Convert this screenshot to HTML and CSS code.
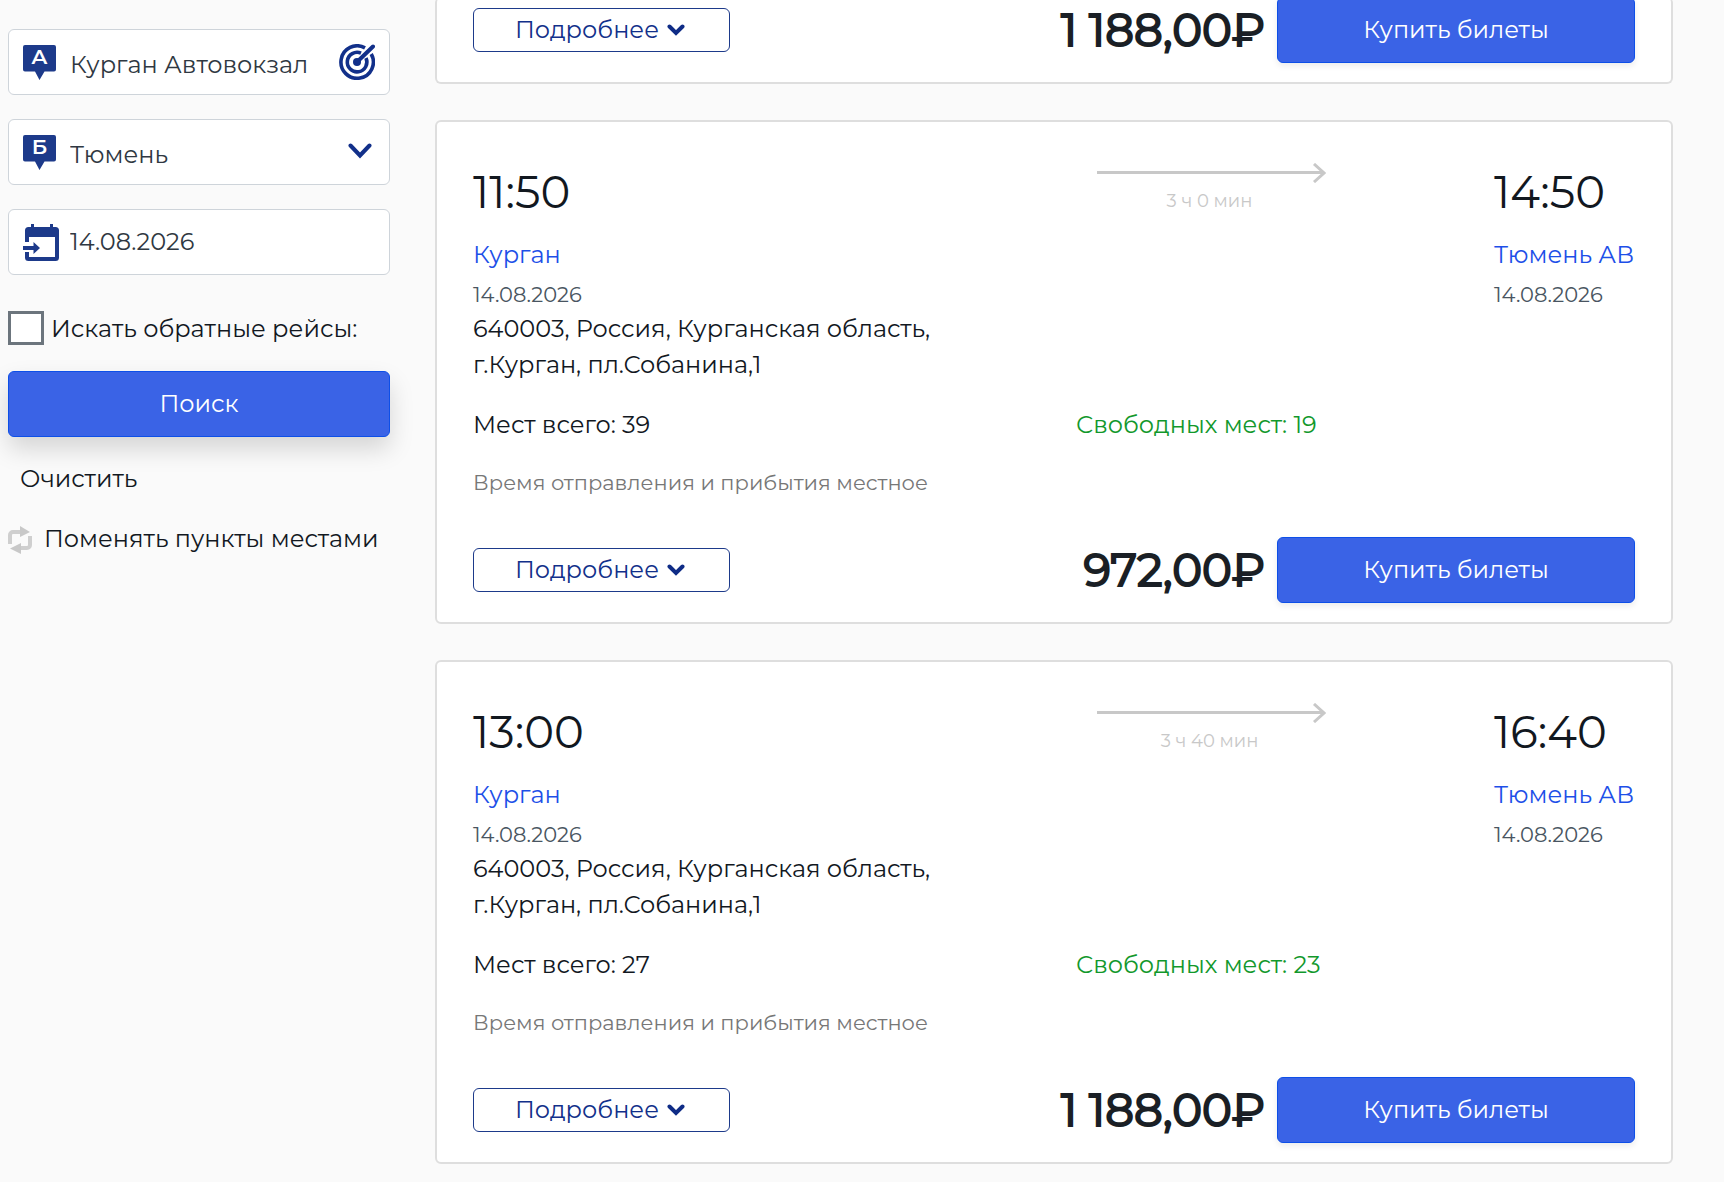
FILE: index.html
```html
<!DOCTYPE html>
<html lang="ru">
<head>
<meta charset="utf-8">
<meta name="viewport" content="width=device-width, initial-scale=1">
<title>Курган Автовокзал — Тюмень</title>
<link rel="stylesheet" href="styles.css">
</head>
<body>
<div class="page">
  <form class="search">
    <div class="field field-place">
      <svg class="pin" width="33" height="35" viewBox="0 0 33 35" aria-hidden="true"><path d="M2 0h29a2 2 0 0 1 2 2v22.500a2 2 0 0 1-2 2H21.500L16.500 35l-4.500-8.500H2a2 2 0 0 1-2-2V2a2 2 0 0 1 2-2z" fill="#1d3a8a"/><text x="16.500" y="19" class="pin-letter">А</text></svg>
      <input class="control" type="text" value="Курган Автовокзал" aria-label="Пункт отправления">
      <svg class="target" width="36" height="36" viewBox="0 0 36 36" fill="none" stroke="#12308a" stroke-width="3.600" aria-hidden="true"><path d="M26 3.900A16.200 16.200 0 1 0 32.200 10"/><path d="M22 9.100A9.800 9.800 0 1 0 27 14"/><circle cx="18" cy="18" r="4" fill="#12308a" stroke="none"/><path d="M18 18L34 2.500" stroke-width="4" stroke-linecap="round"/></svg>
    </div>
    <div class="field field-place">
      <svg class="pin" width="33" height="35" viewBox="0 0 33 35" aria-hidden="true"><path d="M2 0h29a2 2 0 0 1 2 2v22.500a2 2 0 0 1-2 2H21.500L16.500 35l-4.500-8.500H2a2 2 0 0 1-2-2V2a2 2 0 0 1 2-2z" fill="#1d3a8a"/><text x="16.500" y="19" class="pin-letter">Б</text></svg>
      <select class="control" aria-label="Пункт назначения"><option>Тюмень</option></select>
      <svg class="drop" width="24" height="16" viewBox="0 0 24 16" fill="none" stroke="#12308a" stroke-width="4" stroke-linecap="round" aria-hidden="true"><path d="M2.500 2.500L12 12.500l9.500-10"/></svg>
    </div>
    <div class="field">
      <svg class="calendar" width="36" height="37" viewBox="0 0 36 37" aria-hidden="true"><path d="M8 0h3v3h16V0h3v3h2.500A3.500 3.500 0 0 1 36 6.500v27a3.500 3.500 0 0 1-3.500 3.500h-27A3.500 3.500 0 0 1 2 33.500V28h4v5h26V13H6v5H2V6.500A3.500 3.500 0 0 1 5.500 3H8z" fill="#1d3a8a"/><path d="M0 22h10.500v-4l6.500 6-6.500 6v-4H0z" fill="#1d3a8a"/></svg>
      <input class="control" type="text" value="14.08.2026" aria-label="Дата отправления">
    </div>
    <label class="return"><input class="box" type="checkbox">Искать обратные рейсы:</label>
    <button class="btn btn-search" type="submit">Поиск</button>
    <button class="plain plain-clear" type="reset">Очистить</button>
    <button class="plain" type="button">
      <svg width="24" height="30" viewBox="0 -2 24 30" aria-hidden="true"><g fill="none" stroke="#cfcfcf" stroke-width="4"><path d="M2 18V9a3 3 0 0 1 3-3h8"/><path d="M22 10v9a3 3 0 0 1-3 3h-8"/></g><path d="M12 0l10 6-10 5zM13 17L2 22.500 13 28z" fill="#c8c8c8"/></svg>
      Поменять пункты местами
    </button>
  </form>

  <main class="results">
    <article class="card card-scrolled">
      <div class="actions">
        <button class="more" type="button">Подробнее <svg width="18" height="12" viewBox="0 0 18 12" aria-hidden="true"><path d="M2.500 2.500L9 9l6.500-6.500" fill="none" stroke="#0f2c86" stroke-width="4" stroke-linecap="round"/></svg></button>
        <span class="price">1 188,00₽</span>
        <button class="btn btn-buy" type="button">Купить билеты</button>
      </div>
    </article>

    <article class="card">
      <div class="trip">
        <div>
          <div class="time">11:50</div>
          <a class="station" href="#">Курган</a>
          <div class="date">14.08.2026</div>
          <div class="address">640003, Россия, Курганская область, г.Курган, пл.Собанина,1</div>
        </div>
        <div class="way">
          <svg width="230" height="20" viewBox="0 0 230 20" fill="none" stroke="#c8c8c8" stroke-width="3" aria-hidden="true"><path d="M1 9.500h227M218 1l10 9-10 9"/></svg>
          <div class="duration">3 ч 0 мин</div>
        </div>
        <div>
          <div class="time">14:50</div>
          <a class="station" href="#">Тюмень АВ</a>
          <div class="date">14.08.2026</div>
        </div>
      </div>
      <div class="seats"><span>Мест всего: 39</span><span class="free">Свободных мест: 19</span></div>
      <p class="note">Время отправления и прибытия местное</p>
      <div class="actions">
        <button class="more" type="button">Подробнее <svg width="18" height="12" viewBox="0 0 18 12" aria-hidden="true"><path d="M2.500 2.500L9 9l6.500-6.500" fill="none" stroke="#0f2c86" stroke-width="4" stroke-linecap="round"/></svg></button>
        <span class="price">972,00₽</span>
        <button class="btn btn-buy" type="button">Купить билеты</button>
      </div>
    </article>

    <article class="card">
      <div class="trip">
        <div>
          <div class="time">13:00</div>
          <a class="station" href="#">Курган</a>
          <div class="date">14.08.2026</div>
          <div class="address">640003, Россия, Курганская область, г.Курган, пл.Собанина,1</div>
        </div>
        <div class="way">
          <svg width="230" height="20" viewBox="0 0 230 20" fill="none" stroke="#c8c8c8" stroke-width="3" aria-hidden="true"><path d="M1 9.500h227M218 1l10 9-10 9"/></svg>
          <div class="duration">3 ч 40 мин</div>
        </div>
        <div>
          <div class="time">16:40</div>
          <a class="station" href="#">Тюмень АВ</a>
          <div class="date">14.08.2026</div>
        </div>
      </div>
      <div class="seats"><span>Мест всего: 27</span><span class="free">Свободных мест: 23</span></div>
      <p class="note">Время отправления и прибытия местное</p>
      <div class="actions">
        <button class="more" type="button">Подробнее <svg width="18" height="12" viewBox="0 0 18 12" aria-hidden="true"><path d="M2.500 2.500L9 9l6.500-6.500" fill="none" stroke="#0f2c86" stroke-width="4" stroke-linecap="round"/></svg></button>
        <span class="price">1 188,00₽</span>
        <button class="btn btn-buy" type="button">Купить билеты</button>
      </div>
    </article>
  </main>
</div>
</body>
</html>
```
FILE: styles.css
```css
* { box-sizing: border-box; }

body {
  margin: 0;
  background: #fafafa;
  color: #12181f;
  font-family: Montserrat, Inter, "Noto Sans", sans-serif;
  font-size: 24px;
  line-height: 36px;
}

button, input, select {
  font: inherit;
  color: inherit;
  margin: 0;
}

button { cursor: pointer; }

.page {
  display: grid;
  grid-template-columns: 382px minmax(0, 1fr);
  gap: 45px;
  align-items: start;
  padding: 0 51px 18px 8px;
}

/* search form */
.search {
  display: flex;
  flex-direction: column;
  padding-top: 29px;
}

.field {
  display: flex;
  align-items: center;
  height: 66px;
  margin-bottom: 24px;
  padding: 0 14px;
  background: #fff;
  border: 1px solid #ced4da;
  border-radius: 6px;
}

.field svg { flex: none; }
.pin { margin-right: 14px; overflow: visible; }
.calendar { margin-right: 11px; }
.drop { margin: 0 3px 2px 0; }

.pin-letter {
  fill: #fff;
  font-size: 21px;
  font-weight: 600;
  text-anchor: middle;
}

.control {
  flex: 1;
  min-width: 0;
  height: 64px;
  padding: 0 0 2px;
  border: 0;
  outline: 0;
  background: none;
  appearance: none;
  color: #2f3842;
}

.field-place .control { padding-top: 6px; }
.field-place select.control { padding-bottom: 0; }

.return {
  display: flex;
  align-items: flex-start;
  gap: 7px;
  margin: 12px 0 26px;
  height: 34px;
}

.box {
  appearance: none;
  width: 36px;
  height: 34px;
  background: #fff;
  border: 3px solid #6c757d;
}

.btn {
  height: 66px;
  background: #3a63e6;
  border: 1px solid #0d4fe8;
  border-radius: 6px;
  color: #fff;
}

.btn-search {
  box-shadow: 0 12px 24px rgba(0, 0, 0, .15);
  margin-bottom: 24px;
}

.plain {
  display: flex;
  align-items: center;
  gap: 12px;
  align-self: flex-start;
  padding: 0;
  border: 0;
  background: none;
  white-space: nowrap;
}

.plain-clear {
  padding-left: 12px;
  margin-bottom: 24px;
}

/* trips */
.results {
  display: flex;
  flex-direction: column;
  gap: 36px;
}

.card {
  padding: 43px 36px 19px;
  background: #fff;
  border: 2px solid #dedede;
  border-radius: 6px;
}

.card-scrolled {
  margin-top: -3px;
  padding-top: 0;
  border-top: 0;
}

.card-scrolled .actions { margin-top: 0; }

.trip, .seats {
  display: grid;
  grid-template-columns: minmax(0, 603fr) minmax(0, 418fr) 141px;
}

.time {
  font-size: 45px;
  line-height: 54px;
  margin-bottom: 18px;
}

.station {
  display: block;
  color: #1d4fe8;
  text-decoration: none;
  white-space: nowrap;
}

.date {
  margin-top: 6px;
  font-size: 21px;
  line-height: 32px;
  color: #495561;
}

.address { max-width: 480px; }

.way {
  width: 270px;
  text-align: center;
  color: #c8c8c8;
}

.way svg { display: block; margin: -2px auto 0; }

.duration {
  margin-top: 6px;
  padding-right: 3px;
  font-size: 18px;
  line-height: 24px;
}

.seats { margin-top: 24px; }
.free { color: #12982c; white-space: nowrap; }

.note {
  margin: 24px 0 0;
  font-size: 21px;
  line-height: 32px;
  color: #777;
}

.actions {
  display: flex;
  align-items: center;
  margin-top: 38px;
}

.more {
  display: flex;
  align-items: center;
  justify-content: center;
  gap: 8px;
  width: 257px;
  height: 44px;
  padding: 0 3px 0 0;
  background: #fff;
  border: 1px solid #1d3a8a;
  border-radius: 6px;
  color: #12308a;
}

.price {
  margin: 0 12px 0 auto;
  font-size: 45px;
  line-height: 54px;
  color: #1a1f25;
  -webkit-text-stroke: 2px currentColor;
  white-space: nowrap;
}

.btn-buy {
  width: 358px;
  box-shadow: 0 3px 6px rgba(0, 0, 0, .08);
}
```
